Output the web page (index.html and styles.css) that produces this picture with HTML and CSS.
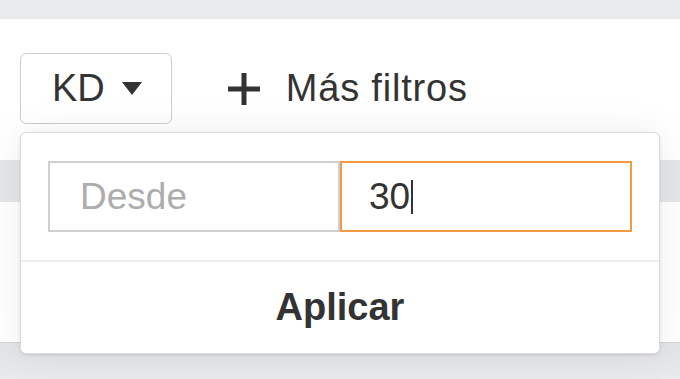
FILE: index.html
```html
<!DOCTYPE html>
<html lang="es">
<head>
    <meta charset="UTF-8">
    <title>Filtros</title>
    <link rel="stylesheet" href="styles.css">
</head>
<body>
    <div class="topbar"></div>

    <div class="page">
        <div class="filters">
            <button class="filter-btn">
                KD
                <span class="caret"></span>
            </button>
            <button class="more-btn">
                <svg class="plus" width="34" height="34" viewBox="0 0 34 34">
                    <path d="M17 1v32M1 17h32" stroke="#333" stroke-width="5" fill="none"/>
                </svg>
                Más filtros
            </button>
        </div>

        <div class="table">
            <div class="table-head"></div>
            <div class="table-row"></div>
            <div class="table-foot"></div>
        </div>

        <!-- dropdown abierto del filtro KD -->
        <div class="dropdown">
            <div class="range">
                <input type="text" class="range-input" placeholder="Desde">
                <div class="range-input active">30<span class="cursor"></span></div>
            </div>
            <div class="apply">Aplicar</div>
        </div>
    </div>
</body>
</html>
```

FILE: styles.css
```css
:root {
    --text-color: #333;
    --border-color: #cfcfcf;
    --accent-color: #f39a43;
    --band-color: #e5e6e8;
}
body {
    margin: 0;
    font-family: "Liberation Sans", Arial, sans-serif;
    color: var(--text-color);
    background-color: white;
}
.topbar {
    height: 19px;
    background-color: #e9eaec;
}
.page {
    position: relative;
}
.filters {
    display: flex;
    align-items: center;
    padding: 34px 0 0 20px;
}
.filter-btn {
    display: flex;
    align-items: center;
    height: 71px;
    padding: 0 29px 0 31px;
    border: 1.5px solid #cdcdcd;
    border-radius: 6px;
    background: white;
    font-family: inherit;
    font-size: 38px;
    color: var(--text-color);
}
.caret {
    width: 0;
    height: 0;
    margin-left: 17px;
    border-left: 10px solid transparent;
    border-right: 10px solid transparent;
    border-top: 13px solid var(--text-color);
}
.more-btn {
    display: flex;
    align-items: center;
    margin-left: 55px;
    padding: 0;
    border: none;
    background: none;
    font-family: inherit;
    font-size: 38px;
    letter-spacing: 0.8px;
    color: var(--text-color);
}
.plus {
    margin-right: 25px;
}
.table {
    margin-top: 36px;
}
.table-head {
    height: 42px;
    background-color: var(--band-color);
}
.table-row {
    height: 140px;
    border-bottom: 1px solid #d6d6d6;
}
.table-foot {
    height: 40px;
    background: linear-gradient(#e3e4e6, #e9eaec);
}
.dropdown {
    position: absolute;
    top: 113px;
    left: 20px;
    width: 640px;
    height: 222px;
    box-sizing: border-box;
    background-color: white;
    border: 1px solid #dcdcdc;
    border-radius: 6px;
    box-shadow: 0 1px 3px rgba(0,0,0,0.12), 0 0 40px rgba(0,0,0,0.07);
}
.range {
    display: flex;
    padding: 28px 27px;
    border-bottom: 2px solid #ececec;
}
.range-input {
    width: 50%;
    height: 71px;
    box-sizing: border-box;
    margin: 0;
    padding: 0 28px 0 30px;
    border: 2px solid var(--border-color);
    border-radius: 0;
    font-family: inherit;
    font-size: 37px;
    color: var(--text-color);
    outline: none;
}
.range-input::placeholder {
    color: #adadad;
}
.range-input.active {
    display: flex;
    align-items: center;
    padding-left: 27px;
    border-color: var(--accent-color);
}
.cursor {
    display: inline-block;
    width: 2px;
    height: 34px;
    margin-left: 1px;
    background-color: var(--text-color);
}
.apply {
    display: flex;
    align-items: center;
    justify-content: center;
    height: 90px;
    font-size: 38px;
    font-weight: bold;
}
```
